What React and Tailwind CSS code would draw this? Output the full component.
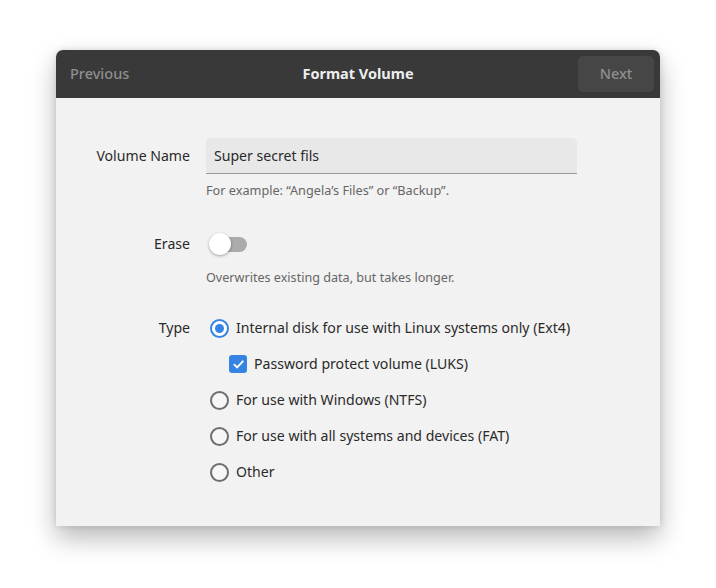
export default function App() {
  const font = { fontFamily: '"Noto Sans", "Open Sans", sans-serif' };
  const Radio = ({ checked }) =>
    checked ? (
      <span className="flex h-[19px] w-[19px] shrink-0 items-center justify-center rounded-full border-2 border-[#3584e4] bg-white">
        <span className="h-[9px] w-[9px] rounded-full bg-[#3584e4]" />
      </span>
    ) : (
      <span className="h-[19px] w-[19px] shrink-0 rounded-full border-2 border-[#6e6e6e] bg-[#f6f6f6]" />
    );
  return (
    <div className="h-[588px] w-[716px] bg-white pl-[56px] pt-[50px]" style={font}>
      <div className="h-[476px] w-[604px] overflow-hidden rounded-t-[7px] bg-[#f2f2f2] shadow-[0_12px_26px_rgba(0,0,0,0.28),0_0_6px_rgba(0,0,0,0.12)]">
        <div className="grid h-[48px] grid-cols-[1fr_auto_1fr] items-center bg-[#393939]">
          <div className="pl-[14px] text-[14.5px] font-medium text-[#8e8e8e]">Previous</div>
          <div className="text-[14.5px] font-bold text-[#eeeeee]">Format Volume</div>
          <div className="flex justify-end pr-[6px]">
            <div className="flex h-[36px] w-[76px] items-center justify-center rounded-[5px] bg-[#464646] text-[14.5px] font-medium text-[#8e8e8e]">
              Next
            </div>
          </div>
        </div>
        <div className="grid grid-cols-[134px_1fr] gap-x-4 pt-[40px] text-[14.1px] text-[#2a2a2a]">
          <div className="flex h-[36px] items-center justify-end">Volume Name</div>
          <div>
            <div className="flex h-[36px] w-[371px] items-center rounded-t-[5px] border-b border-[#9a9a9a] bg-[#e8e8e8] px-2 text-[#2a2a2a]">
              Super secret fils
            </div>
            <div className="mt-[7px] h-[18px] text-[12.7px] leading-[18px] text-[#666666]">
              For example: “Angela’s Files” or “Backup”.
            </div>
          </div>

          <div className="mt-[27px] flex h-[36px] items-center justify-end">Erase</div>
          <div className="mt-[27px]">
            <div className="flex h-[36px] items-center pl-[5px]">
              <div className="relative h-[15px] w-[36px] rounded-full bg-[#ababab]">
                <div className="absolute left-[-2px] top-[-4px] h-[22px] w-[22px] rounded-full bg-white shadow-[0_1px_3px_rgba(0,0,0,0.35)]" />
              </div>
            </div>
            <div className="mt-[7px] h-[18px] text-[12.6px] leading-[18px] text-[#666666]">
              Overwrites existing data, but takes longer.
            </div>
          </div>

          <div className="mt-[23px] flex h-[36px] items-center justify-end">Type</div>
          <div className="mt-[23px] flex flex-col">
            <div className="flex h-[36px] items-center gap-[7px] pl-[4px]">
              <Radio checked />
              <span>Internal disk for use with Linux systems only (Ext4)</span>
            </div>
            <div className="flex h-[36px] items-center gap-[7px] pl-[23px]">
              <span className="flex h-[18px] w-[18px] items-center justify-center rounded-[3px] bg-[#3584e4]">
                <svg width="13" height="13" viewBox="0 0 14 14" fill="none">
                  <path d="M2.5 7.2 L5.6 10.2 L11.6 3.6" stroke="white" strokeWidth="2" strokeLinecap="round" strokeLinejoin="round" />
                </svg>
              </span>
              <span>Password protect volume (LUKS)</span>
            </div>
            <div className="flex h-[36px] items-center gap-[7px] pl-[4px]">
              <Radio />
              <span>For use with Windows (NTFS)</span>
            </div>
            <div className="flex h-[36px] items-center gap-[7px] pl-[4px]">
              <Radio />
              <span>For use with all systems and devices (FAT)</span>
            </div>
            <div className="flex h-[36px] items-center gap-[7px] pl-[4px]">
              <Radio />
              <span>Other</span>
            </div>
          </div>
        </div>
      </div>
    </div>
  );
}
